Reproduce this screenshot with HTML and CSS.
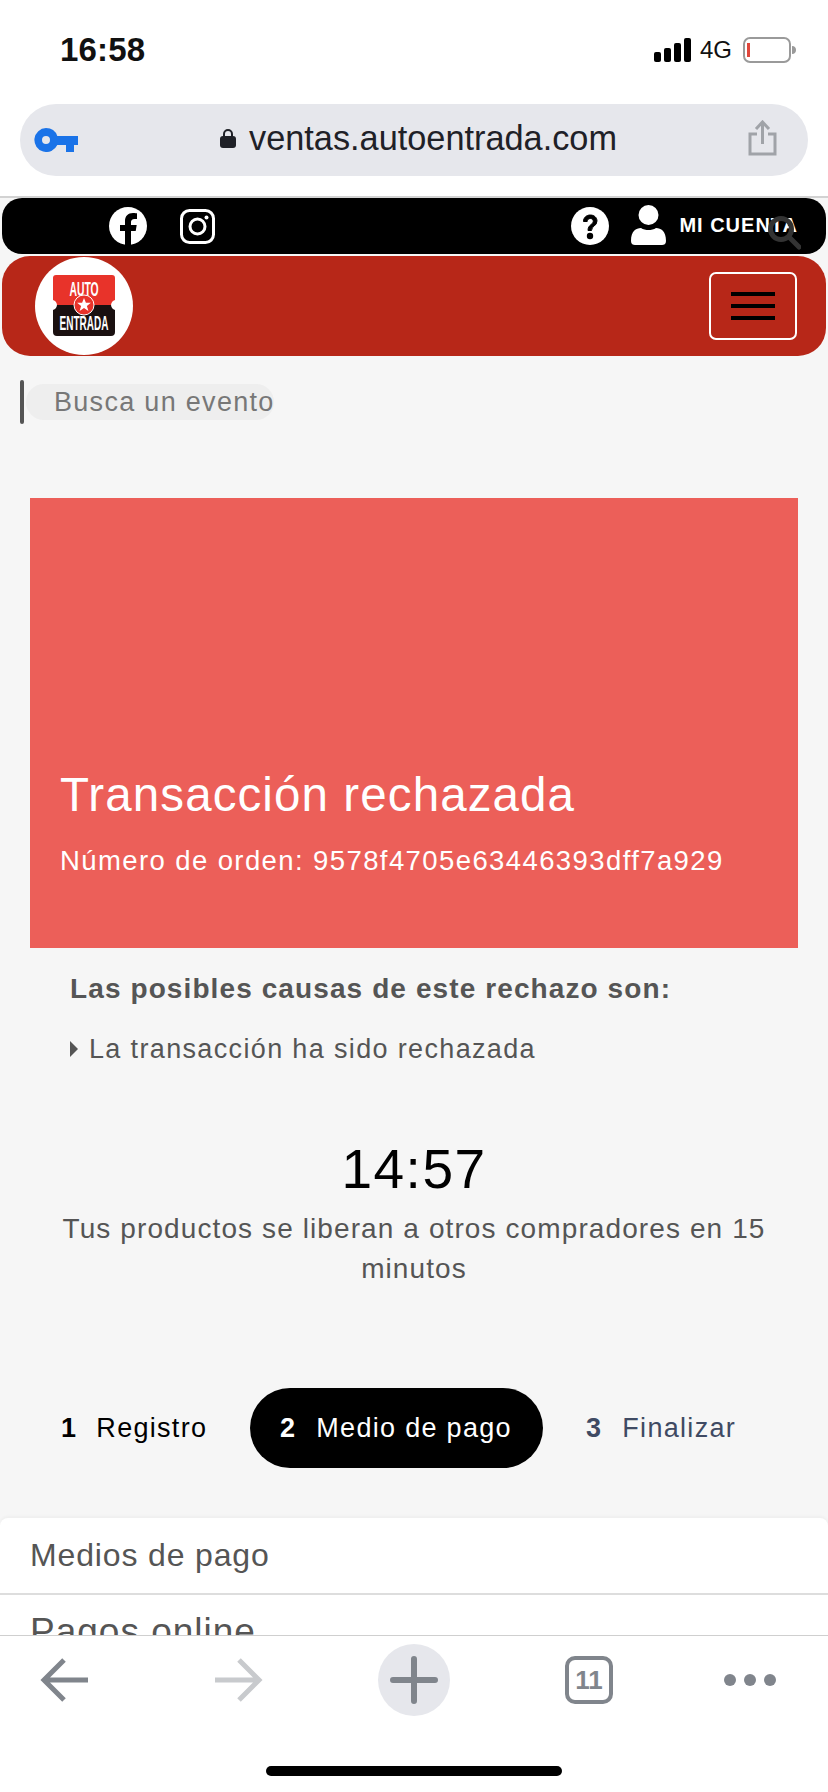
FILE: index.html
```html
<!DOCTYPE html>
<html lang="es">
<head>
    <meta charset="UTF-8">
    <meta name="viewport" content="width=device-width, initial-scale=1.0">
    <title>Transacción rechazada - AutoEntrada</title>
    <link rel="stylesheet" href="styles.css">
</head>
<body>
<div class="screen">
    <div class="status-bar">
        <span class="clock">16:58</span>
        <div class="status-icons">
            <svg class="signal" width="37" height="24" viewBox="0 0 37 24" fill="#000">
                <rect x="0" y="14" width="7" height="10" rx="2"/>
                <rect x="10" y="10" width="7" height="14" rx="2"/>
                <rect x="20" y="5" width="7" height="19" rx="2"/>
                <rect x="30" y="0" width="7" height="24" rx="2"/>
            </svg>
            <span class="network">4G</span>
            <svg class="battery" width="53" height="26" viewBox="0 0 53 26">
                <rect x="1" y="1" width="46" height="24" rx="6" fill="#fff" stroke="#9a9a9a" stroke-width="2"/>
                <rect x="4" y="6" width="3" height="14" fill="#e0473c"/>
                <path d="M49 9c3 0 4 2 4 4s-1 4-4 4z" fill="#9a9a9a"/>
            </svg>
        </div>
    </div>

    <div class="url-row">
        <div class="url-bar">
            <svg class="key" width="44" height="24" viewBox="0 0 44 24" fill="#1a73e8">
                <path d="M12 0a12 12 0 0 1 11.300 8H44v9h-4v7h-8v-7h-8.700A12 12 0 1 1 12 0zm0 8a4 4 0 1 0 0 8 4 4 0 0 0 0-8z" fill-rule="evenodd"/>
            </svg>
            <div class="address">
                <svg width="16" height="20" viewBox="0 0 16 20">
                    <path d="M4 9V6a4 4 0 0 1 8 0v3" fill="none" stroke="#1f2127" stroke-width="2"/>
                    <rect x="0" y="8" width="16" height="12" rx="3" fill="#1f2127"/>
                </svg>
                <span>ventas.autoentrada.com</span>
            </div>
            <svg class="share" width="29" height="36" viewBox="0 0 29 36" fill="none" stroke="#a0a3a8" stroke-width="3">
                <path d="M9 14H2v20h25V14h-7"/>
                <path d="M14.500 24V3M8 9l6.500-7L21 9"/>
            </svg>
        </div>
    </div>

    <div class="topbar">
        <div class="social">
            <svg width="38" height="38" viewBox="0 0 38 38">
                <circle cx="19" cy="19" r="19" fill="#fff"/>
                <path d="M16 38V24h-5v-6h5v-4c0-5 3-8 8-8 2 0 4 .3 4 .3V12h-2.500c-2.500 0-3.500 1.500-3.500 3v3h5.700l-1 6H22v14z" fill="#000"/>
            </svg>
            <svg width="35" height="35" viewBox="0 0 35 35" fill="none" stroke="#fff" stroke-width="3">
                <rect x="1.500" y="1.500" width="32" height="32" rx="8"/>
                <circle cx="17.500" cy="17.500" r="7.500"/>
                <circle cx="26.500" cy="8.500" r="2" fill="#fff" stroke="none"/>
            </svg>
        </div>
        <div class="account">
            <svg width="38" height="38" viewBox="0 0 38 38">
                <circle cx="19" cy="19" r="19" fill="#fff"/>
                <path d="M12.500 14.500c0-4 3-6.500 6.800-6.500s6.700 2.500 6.700 6c0 5-5.500 5-5.500 9.500h-3.500c0-6 5.300-6 5.300-9.300 0-1.500-1.300-2.700-3-2.700s-3.100 1.200-3.100 3z" fill="#000" stroke="#000"/>
                <circle cx="19" cy="29" r="3.200" fill="#000"/>
            </svg>
            <svg class="user" width="35" height="40" viewBox="0 0 35 40" fill="#fff">
                <circle cx="17.500" cy="10" r="10"/>
                <path d="M0 36c0-10 5-13 10-13 2 1.500 5 2 7.500 2s5.500-.5 7.500-2c5 0 10 3 10 13 0 3-2 4-4 4H4c-2 0-4-1-4-4z"/>
            </svg>
            <span class="account-label">MI CUENTA</span>
            <svg class="search-icon" width="33" height="34" viewBox="0 0 33 34" fill="none" stroke="#333" stroke-width="5">
                <circle cx="13" cy="13" r="10.500"/>
                <path d="M21 21l10 10" stroke-linecap="round"/>
            </svg>
        </div>
    </div>

    <header class="navbar">
        <div class="logo">
            <svg width="64" height="64" viewBox="0 0 64 64">
                <path d="M4 1H60a3 3 0 0 1 3 3V26a6 6 0 0 0-4 5H5a6 6 0 0 0-4-5V4a3 3 0 0 1 3-3z" fill="#e8332a"/>
                <path d="M5 31H59a6 6 0 0 0 4 5V58a4 4 0 0 1-4 4H5a4 4 0 0 1-4-4V36a6 6 0 0 0 4-5z" fill="#1a1010"/>
                <text class="logo-text" transform="translate(32 22) scale(.52 1)" text-anchor="middle">AUTO</text>
                <circle cx="32" cy="31" r="10" fill="#e8332a" stroke="#fff" stroke-width="1"/>
                <path d="M32 24l1.900 4.700h5l-4 3.200 1.500 5-4.400-2.900-4.400 2.900 1.500-5-4-3.200h5z" fill="#fff"/>
                <text class="logo-text" transform="translate(32 56) scale(.5 1)" text-anchor="middle">ENTRADA</text>
            </svg>
        </div>
        <button class="menu-btn">
            <span></span><span></span><span></span>
        </button>
    </header>

    <div class="search-row">
        <div class="search-caret"></div>
        <div class="search-field">Busca un evento</div>
    </div>

    <section class="rejected">
        <h1>Transacción rechazada</h1>
        <p>Número de orden: 9578f4705e63446393dff7a929</p>
    </section>

    <div class="causes">
        <h2>Las posibles causas de este rechazo son:</h2>
        <p class="cause"><span class="arrow"></span>La transacción ha sido rechazada</p>
    </div>

    <div class="timer">
        <div class="time">14:57</div>
        <p>Tus productos se liberan a otros compradores en 15 minutos</p>
    </div>

    <div class="steps">
        <div class="step step-done"><b>1</b>Registro</div>
        <div class="step step-active"><b>2</b>Medio de pago</div>
        <div class="step step-next"><b>3</b>Finalizar</div>
    </div>

    <div class="payments">
        <div class="payment-row">Medios de pago</div>
        <div class="payment-row payment-group">Pagos online</div>
    </div>

    <!-- browser toolbar sits over the page -->
    <nav class="toolbar">
        <div class="tools">
            <svg width="48" height="44" viewBox="0 0 48 44" fill="none" stroke="#80858c" stroke-width="5">
                <path d="M48 22H4M24 2L4 22l20 20"/>
            </svg>
            <svg class="tool-forward" width="48" height="44" viewBox="0 0 48 44" fill="none" stroke="#c8cacd" stroke-width="5">
                <path d="M0 22h44M24 2l20 20-20 20"/>
            </svg>
            <div class="plus">
                <svg width="48" height="48" viewBox="0 0 48 48" stroke="#80858c" stroke-width="6" stroke-linecap="round">
                    <path d="M3 24h42M24 3v42"/>
                </svg>
            </div>
            <div class="tabs">11</div>
            <div class="dots"><i></i><i></i><i></i></div>
        </div>
        <div class="home-bar"></div>
    </nav>
</div>
</body>
</html>
```

FILE: styles.css
```css
* {
    box-sizing: border-box;
}
body {
    margin: 0;
    background: #fff;
    font-family: "Liberation Sans", Arial, sans-serif;
}
.screen {
    position: relative;
    width: 828px;
    height: 1792px;
    overflow: hidden;
    background: #f6f6f6;
}

/* phone status bar */
.status-bar {
    height: 104px;
    padding: 0 32px 4px 60px;
    background: #fff;
    display: flex;
    align-items: center;
    justify-content: space-between;
}
.clock {
    font-size: 33px;
    font-weight: bold;
    color: #111;
    letter-spacing: .2px;
}
.status-icons {
    display: flex;
    align-items: center;
    gap: 9px;
}
.network {
    font-size: 24px;
    color: #111;
}
.battery {
    margin-left: 2px;
}

/* address bar */
.url-row {
    height: 94px;
    padding: 0 20px;
    background: #fff;
    border-bottom: 2px solid #d2d2d2;
}
.url-bar {
    position: relative;
    height: 72px;
    border-radius: 36px;
    background: #e6e7ec;
    display: flex;
    align-items: center;
    justify-content: center;
}
.key {
    position: absolute;
    left: 14px;
    top: 24px;
}
.share {
    position: absolute;
    right: 31px;
    top: 16px;
}
.address {
    display: flex;
    align-items: center;
    gap: 13px;
    font-size: 34.300px;
    color: #1f2127;
    margin: -4px 0 0 9px;
}

/* black bar with social links */
.topbar {
    height: 56px;
    margin: 0 2px;
    background: #000;
    border-radius: 20px;
    display: flex;
    align-items: center;
    justify-content: space-between;
    padding-left: 107px;
}
.social {
    display: flex;
    align-items: center;
    gap: 33px;
}
.account {
    position: relative;
    display: flex;
    align-items: center;
    margin-right: 28px;
}
.user {
    margin-left: 22px;
    margin-top: -2px;
}
.account-label {
    margin-left: 13px;
    font-size: 20px;
    font-weight: bold;
    color: #fff;
    letter-spacing: 1px;
    margin-top: -2px;
}
.search-icon {
    position: absolute;
    right: -3px;
    top: 9px;
}

/* red nav */
.navbar {
    height: 100px;
    margin: 2px 2px 0;
    background: #b72718;
    border-radius: 28px;
    display: flex;
    align-items: center;
    justify-content: space-between;
    padding: 0 29px 0 33px;
}
.logo {
    width: 98px;
    height: 98px;
    border-radius: 50%;
    background: #fff;
    display: flex;
    align-items: center;
    justify-content: center;
}
.logo-text {
    font-size: 20px;
    font-weight: bold;
    fill: #fff;
}
.menu-btn {
    width: 88px;
    height: 68px;
    padding: 0;
    background: none;
    border: 2px solid #fff;
    border-radius: 7px;
    display: flex;
    flex-direction: column;
    align-items: center;
    justify-content: center;
    gap: 8px;
}
.menu-btn span {
    width: 44px;
    height: 4px;
    background: #000;
}

/* search */
.search-row {
    height: 142px;
    padding: 24px 0 0 20px;
    display: flex;
    align-items: flex-start;
}
.search-caret {
    width: 4px;
    height: 44px;
    border-radius: 2px;
    background: #555;
}
.search-field {
    width: 248px;
    height: 36px;
    margin: 4px 0 0 2px;
    padding-left: 28px;
    border-radius: 18px;
    background: #eee;
    font-size: 27px;
    line-height: 36px;
    letter-spacing: 1.300px;
    white-space: nowrap;
    color: #777;
}

/* rejected banner */
.rejected {
    height: 450px;
    margin: 0 30px;
    padding: 0 30px 71px;
    background: #ec5f59;
    color: #fff;
    display: flex;
    flex-direction: column;
    justify-content: flex-end;
}
.rejected h1 {
    margin: 0;
    font-size: 47.500px;
    font-weight: normal;
    letter-spacing: 1.100px;
}
.rejected p {
    margin: 23px 0 0;
    font-size: 27.500px;
    letter-spacing: 1.400px;
}

.causes {
    padding: 25px 70px 0;
    color: #555;
}
.causes h2 {
    margin: 0;
    font-size: 28px;
    line-height: 32px;
    letter-spacing: 1.100px;
}
.cause {
    margin: 28px 0 0;
    font-size: 27px;
    line-height: 32px;
    letter-spacing: 1.350px;
    display: flex;
    align-items: center;
}
.arrow {
    width: 0;
    height: 0;
    margin-right: 11px;
    border-left: 8px solid #555;
    border-top: 8px solid transparent;
    border-bottom: 8px solid transparent;
}

.timer {
    padding: 0 56px;
    margin-top: 72px;
    text-align: center;
    color: #555;
}
.time {
    font-size: 55px;
    line-height: 64px;
    letter-spacing: 1.500px;
    color: #000;
}
.timer p {
    margin: 8px 0 0;
    font-size: 28px;
    line-height: 40px;
    letter-spacing: 1.100px;
}

/* checkout steps */
.steps {
    display: flex;
    align-items: center;
    margin-top: 99px;
    padding-left: 61px;
    font-size: 27px;
    letter-spacing: 1.300px;
}
.step {
    height: 80px;
    display: flex;
    align-items: center;
}
.step b {
    margin-right: 20px;
}
.step-done {
    color: #000;
    width: 189px;
}
.step-done b {
    margin-right: 19px;
}
.step-active {
    width: 293px;
    padding-left: 30px;
    background: #000;
    color: #fff;
    border-radius: 40px;
}
.step-next {
    margin-left: 43px;
    color: #3f4a63;
}

.payments {
    margin-top: 50px;
    background: #fff;
    border-radius: 8px 8px 0 0;
    color: #555;
    box-shadow: 0 -2px 3px rgba(0, 0, 0, .03);
}
.payment-row {
    height: 77px;
    padding: 0 30px;
    font-size: 32px;
    line-height: 74px;
    letter-spacing: .85px;
    border-bottom: 2px solid #ddd;
}
.payment-group {
    font-size: 37px;
    letter-spacing: 1px;
}

/* bottom browser toolbar */
.toolbar {
    position: absolute;
    left: 0;
    right: 0;
    bottom: 0;
    height: 157px;
    background: #fff;
    border-top: 1px solid #cfcfcf;
}
.tools {
    height: 72px;
    margin-top: 8px;
    padding-left: 40px;
    display: flex;
    align-items: center;
}
.tool-forward {
    margin-left: 127px;
}
.plus {
    width: 72px;
    height: 72px;
    margin-left: 115px;
    border-radius: 50%;
    background: #e6e7ec;
    display: flex;
    align-items: center;
    justify-content: center;
}
.tabs {
    width: 48px;
    height: 48px;
    margin-left: 115px;
    border: 4px solid #80858c;
    border-radius: 10px;
    color: #80858c;
    font-size: 26px;
    font-weight: bold;
    line-height: 40px;
    text-align: center;
}
.dots {
    display: flex;
    gap: 8px;
    margin-left: 111px;
}
.dots i {
    width: 12px;
    height: 12px;
    border-radius: 50%;
    background: #80858c;
}
.home-bar {
    position: absolute;
    left: 266px;
    bottom: 16px;
    width: 296px;
    height: 10px;
    border-radius: 5px;
    background: #000;
}
```
